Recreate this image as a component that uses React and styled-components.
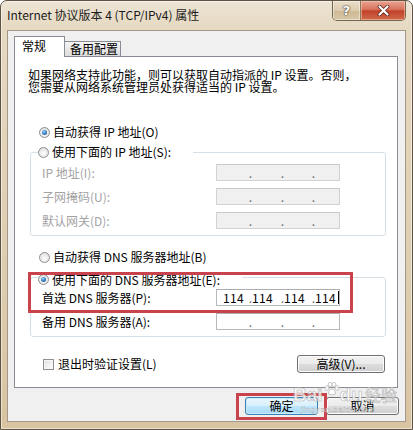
import React from 'react'
import styled, { createGlobalStyle } from 'styled-components'

const GlobalStyle = createGlobalStyle`
  html, body {
    margin: 0;
    padding: 0;
    background: #fff;
  }
  body {
    font-family: "Noto Sans CJK SC", "Noto Sans", sans-serif;
    font-size: 12px;
    color: #000;
  }
`;

const IpInput = ({ values = ['', '', '', ''], disabled, cursor }) => (
  <IpBox $disabled={disabled}>
    <IpPart $first>{values[0]}</IpPart>
    <IpDot>.</IpDot>
    <IpPart>{values[1]}</IpPart>
    <IpDot>.</IpDot>
    <IpPart>{values[2]}</IpPart>
    <IpDot>.</IpDot>
    <IpPart>
      {values[3]}
      {cursor && <Caret />}
    </IpPart>
  </IpBox>
);

const Radio = ({ checked }) => <RadioCircle>{checked && <RadioDot />}</RadioCircle>;

const App = () => {
  return (
    <>
      <GlobalStyle />
      <Window>
        <TitleBar>
          <Title>Internet 协议版本 4 (TCP/IPv4) 属性</Title>
          <CaptionButtons>
            <HelpButton>?</HelpButton>
            <CloseButton>
              <svg width="13" height="11" viewBox="0 0 13 11">
                <path d="M2.5 1.5 L10.5 9.5 M10.5 1.5 L2.5 9.5" stroke="#5a2418" strokeWidth="3.8" strokeLinecap="round" />
                <path d="M2.5 1.5 L10.5 9.5 M10.5 1.5 L2.5 9.5" stroke="#fff" strokeWidth="2.2" strokeLinecap="round" />
              </svg>
            </CloseButton>
          </CaptionButtons>
        </TitleBar>

        <Client>
          <Tabs>
            <Tab $active>常规</Tab>
            <Tab>备用配置</Tab>
          </Tabs>

          <Panel>
            <Description>
              <DescLine>如果网络支持此功能，则可以获取自动指派的 IP 设置。否则，</DescLine>
              <DescLine>您需要从网络系统管理员处获得适当的 IP 设置。</DescLine>
            </Description>

            <OptionRow $top={32}>
              <Radio checked />
              <span>自动获得 IP 地址(O)</span>
            </OptionRow>

            <Group>
              <Legend>
                <LegendInner>
                  <Radio />
                  <span>使用下面的 IP 地址(S):</span>
                </LegendInner>
              </Legend>
              <Rows>
                <FieldRow>
                  <FieldLabel $disabled>IP 地址(I):</FieldLabel>
                  <IpInput disabled />
                </FieldRow>
                <FieldRow>
                  <FieldLabel $disabled>子网掩码(U):</FieldLabel>
                  <IpInput disabled />
                </FieldRow>
                <FieldRow>
                  <FieldLabel $disabled>默认网关(D):</FieldLabel>
                  <IpInput disabled />
                </FieldRow>
              </Rows>
            </Group>

            <OptionRow $top={14}>
              <Radio />
              <span>自动获得 DNS 服务器地址(B)</span>
            </OptionRow>

            <Group>
              <Legend>
                <LegendInner>
                  <Radio checked />
                  <span>使用下面的 DNS 服务器地址(E):</span>
                </LegendInner>
              </Legend>
              <Rows>
                <FieldRow>
                  <FieldLabel>首选 DNS 服务器(P):</FieldLabel>
                  <IpInput values={['114', '114', '114', '114']} cursor />
                </FieldRow>
                <FieldRow>
                  <FieldLabel>备用 DNS 服务器(A):</FieldLabel>
                  <IpInput />
                </FieldRow>
              </Rows>
            </Group>

            <BottomRow>
              <CheckLabel>
                <CheckBox />
                <span>退出时验证设置(L)</span>
              </CheckLabel>
              <Button $width={88}>高级(V)...</Button>
            </BottomRow>
          </Panel>

          <Footer>
            <Button $width={73} $default>确定</Button>
            <Button $width={73}>取消</Button>
          </Footer>
        </Client>

        {/* red marks drawn over the screenshot */}
        <Mark style={{ left: 27, top: 271, width: 325, height: 41 }} />
        <Mark style={{ left: 235, top: 392, width: 91, height: 27 }} />

        <Watermark>
          <WmLogo>
            Bai
            <svg width="16" height="14" viewBox="0 0 16 14">
              <g fill="rgba(255,255,255,0.8)" stroke="#b9b9b9" strokeWidth="0.8">
                <ellipse cx="3" cy="6" rx="2" ry="2.4" />
                <ellipse cx="6.2" cy="2.6" rx="1.9" ry="2.3" />
                <ellipse cx="10" cy="2.6" rx="1.9" ry="2.3" />
                <ellipse cx="13" cy="6" rx="2" ry="2.4" />
                <path d="M4.5 12 C4.5 8.5 6.5 7 8 7 C9.5 7 11.5 8.5 11.5 12 C10 13.2 6 13.2 4.5 12 Z" />
              </g>
            </svg>
            du<WmCn>经验</WmCn>
          </WmLogo>
          <WmUrl>jingyan.baidu.com</WmUrl>
        </Watermark>
      </Window>
    </>
  );
}

const Window = styled.div`
  position: relative;
  width: 413px;
  height: 430px;
  box-sizing: border-box;
  border: 1px solid #5f5443;
  border-radius: 7px 7px 0 0;
  background: linear-gradient(180deg, #ede4d4 0%, #e6d9c2 28px, #dfcfb2 55%, #d8c4a1 100%);
  box-shadow: inset 0 0 0 1px rgba(255, 255, 255, 0.5);
  display: flex;
  flex-direction: column;
  overflow: hidden;
`;

const TitleBar = styled.div`
  height: 29px;
  flex: none;
  display: flex;
  justify-content: space-between;
  align-items: flex-start;
`;

const Title = styled.div`
  padding: 6px 0 0 6px;
  line-height: 16px;
  font-size: 12px;
  color: #1b1b1b;
  white-space: nowrap;
`;

const CaptionButtons = styled.div`
  display: flex;
  height: 19px;
  margin-right: 6px;
  border: 1px solid #76684f;
  border-top: none;
  border-radius: 0 0 5px 5px;
  overflow: hidden;
`;

const HelpButton = styled.div`
  width: 27px;
  display: flex;
  align-items: center;
  justify-content: center;
  border-right: 1px solid #8a7a5e;
  background: linear-gradient(180deg, #eadfca 0%, #dccbae 50%, #cfb994 51%, #d8c6a6 100%);
  box-shadow: inset 0 0 0 1px rgba(255, 255, 255, 0.45);
  color: #fff;
  font: bold 13px "DejaVu Sans", sans-serif;
  text-shadow: 0 0 1px #3d3120, 0 0 2px #3d3120;
`;

const CloseButton = styled.div`
  width: 44px;
  display: flex;
  align-items: center;
  justify-content: center;
  background: linear-gradient(180deg, #e8a493 0%, #d9715a 45%, #c2412a 52%, #cf6a4a 100%);
  box-shadow: inset 0 0 0 1px rgba(255, 210, 190, 0.5);
`;

const Client = styled.div`
  flex: 1;
  margin: 0 6px 7px;
  border: 1px solid #a3978a;
  background: #f0f0f0;
  padding: 5px 6px 0;
  display: flex;
  flex-direction: column;
`;

const Tabs = styled.div`
  position: relative;
  z-index: 1;
  display: flex;
  align-items: flex-end;
  height: 21px;
  margin-bottom: -1px;
`;

const Tab = styled.div`
  box-sizing: border-box;
  height: ${p => (p.$active ? '21px' : '15px')};
  width: ${p => (p.$active ? '51px' : '56px')};
  margin-bottom: ${p => (p.$active ? '0' : '1px')};
  padding: ${p => (p.$active ? '2px 0 0 7px' : '0 0 0 5px')};
  line-height: 14px;
  font-size: 12px;
  border: 1px solid #898c95;
  border-bottom: none;
  border-left: ${p => (p.$active ? '1px solid #898c95' : 'none')};
  background: ${p => (p.$active ? '#fff' : 'linear-gradient(180deg, #f4f4f4 0%, #e9e9e9 50%, #dcdcdc 100%)')};
`;

const Panel = styled.div`
  box-sizing: border-box;
  width: 384px;
  height: 332px;
  border: 1px solid #898c95;
  background: #fff;
  padding: 12px 11px 0 15px;
  display: flex;
  flex-direction: column;
`;

const Description = styled.div`
  margin: 0 0 0 -2px;
  font-size: 12px;
`;

const DescLine = styled.div`
  height: 12px;
  line-height: 12px;
  white-space: nowrap;
`;

const OptionRow = styled.div`
  display: flex;
  align-items: center;
  gap: 3px;
  height: 14px;
  margin-top: ${p => p.$top}px;
  padding-left: 9px;
  line-height: 14px;
`;

const RadioCircle = styled.span`
  box-sizing: border-box;
  width: 11px;
  height: 11px;
  flex: none;
  border-radius: 50%;
  border: 1px solid #8c8f91;
  background: radial-gradient(circle at 50% 60%, #ffffff 0%, #e9e9e9 55%, #cfd1d2 100%);
  display: flex;
  align-items: center;
  justify-content: center;
`;

const RadioDot = styled.span`
  width: 5px;
  height: 5px;
  border-radius: 50%;
  background: radial-gradient(circle at 40% 35%, #9fd3ff 0%, #3f86c9 45%, #17457e 100%);
`;

const Group = styled.fieldset`
  margin: 6px 0 0;
  padding: 5px 0 5px 7px;
  min-width: 0;
  border: 1px solid #d5dfe5;
  border-radius: 3px;
`;

const Legend = styled.legend`
  margin: 0;
  padding: 0 22px 0 0;
  height: 14px;
  line-height: 14px;
`;

const LegendInner = styled.span`
  display: inline-flex;
  align-items: center;
  gap: 3px;
  height: 14px;
`;

const Rows = styled.div`
  display: flex;
  flex-direction: column;
  gap: 6px;
  padding-left: 4px;
`;

const FieldRow = styled.div`
  display: grid;
  grid-template-columns: 174px 124px;
  align-items: center;
  height: 18px;
`;

const FieldLabel = styled.span`
  color: ${p => (p.$disabled ? '#a3a3a3' : '#000')};
  white-space: nowrap;
  line-height: 14px;
`;

const IpBox = styled.div`
  box-sizing: border-box;
  height: 17px;
  margin-top: -1px;
  padding-left: 1px;
  display: grid;
  grid-template-columns: 31px 3px 29px 3px 28px 3px 25px;
  align-items: center;
  border: 1px solid ${p => (p.$disabled ? '#d2d2d2' : '#b5b9bd')};
  border-top-color: ${p => (p.$disabled ? '#c9c9c9' : '#abadb3')};
  background: ${p => (p.$disabled ? '#f0f0f0' : '#fff')};
  color: ${p => (p.$disabled ? '#a3a3a3' : '#000')};
  line-height: 14px;
`;

const IpPart = styled.span`
  display: flex;
  align-items: center;
  justify-content: ${p => (p.$first ? 'center' : 'flex-start')};
  white-space: nowrap;
  letter-spacing: 0.3px;
`;

const IpDot = styled.span`
  display: flex;
  justify-content: center;
  color: #6a6a6a;
`;

const Caret = styled.span`
  width: 1px;
  height: 13px;
  margin-left: 2px;
  background: #000;
`;

const BottomRow = styled.div`
  display: flex;
  justify-content: space-between;
  align-items: center;
  height: 18px;
  margin-top: 18px;
  padding: 0 1px 0 13px;
`;

const CheckLabel = styled.label`
  display: flex;
  align-items: center;
  gap: 4px;
  line-height: 14px;
`;

const CheckBox = styled.span`
  box-sizing: border-box;
  width: 11px;
  height: 11px;
  border: 1px solid #8f8f8f;
  background: linear-gradient(135deg, #dcdcdc 0%, #f4f4f4 60%, #ffffff 100%);
  box-shadow: inset 0 0 0 1px #f6f6f6;
`;

const Button = styled.div`
  box-sizing: border-box;
  width: ${p => p.$width}px;
  height: 18px;
  display: flex;
  align-items: center;
  justify-content: center;
  line-height: 14px;
  font-size: 12px;
  border-radius: 3px;
  border: 1px solid ${p => (p.$default ? '#3c7fb1' : '#707070')};
  background: ${p =>
    p.$default
      ? 'linear-gradient(180deg, #eaf6fd 0%, #d9f0fc 48%, #bee6fd 52%, #a7d9f5 100%)'
      : 'linear-gradient(180deg, #f2f2f2 0%, #ebebeb 48%, #dddddd 52%, #cfcfcf 100%)'};
  box-shadow: inset 0 0 0 1px ${p => (p.$default ? '#c7ecfc' : '#fcfcfc')};
`;

const Footer = styled.div`
  display: flex;
  justify-content: flex-end;
  gap: 8px;
  margin-top: 9px;
`;

const Mark = styled.div`
  position: absolute;
  box-sizing: border-box;
  border: 3px solid #c8434c;
  pointer-events: none;
`;

const Watermark = styled.div`
  position: absolute;
  left: 292px;
  top: 381px;
  display: flex;
  flex-direction: column;
  align-items: flex-start;
  pointer-events: none;
`;

const WmLogo = styled.div`
  display: flex;
  align-items: flex-end;
  font: bold 19px "Liberation Sans", sans-serif;
  line-height: 22px;
  color: rgba(255, 255, 255, 0.75);
  -webkit-text-stroke: 0.6px #b5b5b5;

  svg {
    margin: 0 0 10px 1px;
  }
`;

const WmCn = styled.span`
  margin-left: 2px;
  font: 16px "Noto Sans CJK SC", sans-serif;
`;

const WmUrl = styled.div`
  margin: -1px 0 0 8px;
  font: 8px "Liberation Sans", sans-serif;
  letter-spacing: 0.6px;
  color: rgba(255, 255, 255, 0.75);
  -webkit-text-stroke: 0.3px #b0b0b0;
`;

export default App
